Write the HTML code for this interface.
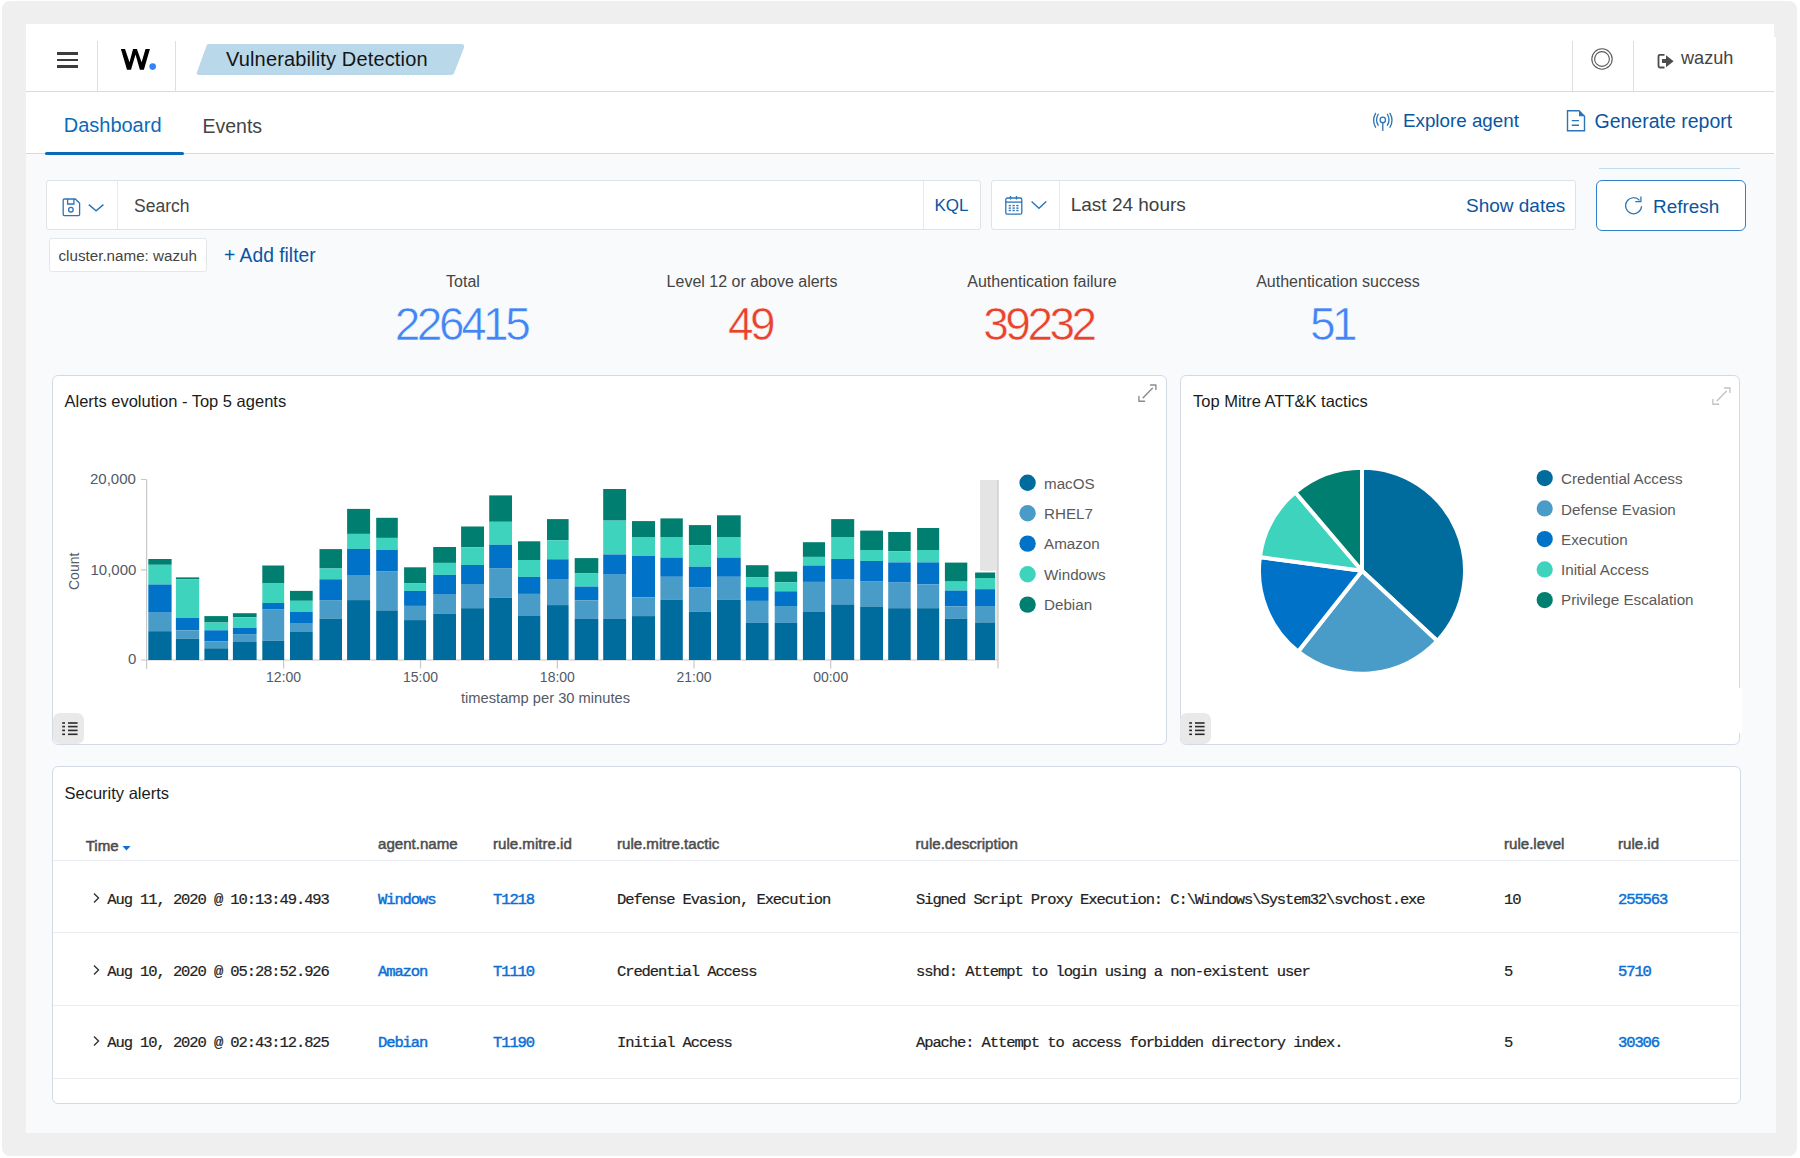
<!DOCTYPE html>
<html><head><meta charset="utf-8">
<style>
*{box-sizing:border-box;margin:0;padding:0}
html,body{width:1800px;height:1158px;overflow:hidden;background:#fff}
body{position:relative;font-family:"Liberation Sans",sans-serif;color:#343741}
.a{position:absolute;white-space:nowrap}
.frame{position:absolute;left:2px;top:1px;width:1795px;height:1155px;background:#efefef;border-radius:8px}
.page{position:absolute;left:26px;top:24px;width:1750px;height:1109px;background:#f9fafc}
.hdr{position:absolute;left:26px;top:24px;width:1750px;height:68px;background:#fff}
.tabs{position:absolute;left:26px;top:92px;width:1750px;height:61.5px;background:#fff}
.vdiv{position:absolute;width:1px;background:#dedede}
.blue{color:#0a55a2}
.panel{position:absolute;background:#fff;border:1px solid #d3dae6;border-radius:6px}
.box{position:absolute;background:#fff;border:1px solid #dfe3e8;border-radius:3px}
.stat-l{font-size:16px;color:#444;text-align:center;width:300px}
.stat-v{font-size:46px;letter-spacing:-3.5px;text-align:center;width:300px;-webkit-text-stroke:0.6px #f9fafc}
.th{font-size:15.1px;color:#4d4d4d;-webkit-text-stroke:0.5px #4d4d4d}
.td{font-family:"Liberation Mono",monospace;font-size:15.5px;letter-spacing:-1.1px;color:#222;-webkit-text-stroke:0.2px #222}
.lk{font-family:"Liberation Mono",monospace;font-size:15.5px;letter-spacing:-1.1px;color:#0b6fd6;-webkit-text-stroke:0.45px #0b6fd6}
.rowline{position:absolute;left:53px;width:1686px;height:1px;background:#e9edf2}
.leg{font-size:15.2px;color:#5a5a5a}
</style></head><body>
<div class="frame"></div>
<div class="page"></div>

<!-- header -->
<div class="hdr"></div>
<div class="a" style="left:26px;top:91px;width:1748px;height:1px;background:#d9d9d9"></div>
<div class="a" style="left:1774px;top:24px;width:2px;height:13px;background:#efefef"></div>
<div class="vdiv" style="left:97px;top:41px;height:50px"></div>
<div class="vdiv" style="left:175px;top:41px;height:50px"></div>
<div class="vdiv" style="left:1572px;top:41px;height:50px"></div>
<div class="vdiv" style="left:1633px;top:41px;height:50px"></div>
<!-- hamburger -->
<div class="a" style="left:57px;top:52px;width:21px;height:2.5px;background:#3c3c3c"></div>
<div class="a" style="left:57px;top:58.8px;width:21px;height:2.5px;background:#3c3c3c"></div>
<div class="a" style="left:57px;top:65.2px;width:21px;height:2.5px;background:#3c3c3c"></div>
<!-- logo -->
<svg class="a" style="left:118px;top:45px" width="40" height="30" viewBox="0 0 40 30">
<path d="M2.9,4 L7,4 L11.5,17.25 L15.05,4 L18.9,4 L23.6,17.25 L27.5,4 L31.9,4 L25.9,24.7 L21.9,24.7 L17.5,9.6 L13,24.7 L9,24.7 Z" fill="#000"/>
<circle cx="34.66" cy="21.6" r="3.3" fill="#3584f6"/>
</svg>
<!-- app badge -->
<svg class="a" style="left:190px;top:40px" width="280" height="40">
<path d="M17,4.5 Q18,4 20,4 L272,4 Q275,4.5 274,7.5 L264,33.5 Q263,35 260,35 L9,35 Q6,35 7,32 Z" fill="#b9d8ea"/>
</svg>
<div class="a" style="left:226px;top:48.3px;font-size:20px;color:#151515;letter-spacing:0.15px">Vulnerability Detection</div>

<!-- header right -->
<svg class="a" style="left:1589px;top:46px" width="26" height="26"><circle cx="13" cy="13" r="10.2" fill="none" stroke="#5a5a5a" stroke-width="1.1"/><circle cx="13" cy="13" r="7.4" fill="none" stroke="#5a5a5a" stroke-width="1.1"/></svg>
<svg class="a" style="left:1655px;top:52px" width="22" height="18" viewBox="0 0 22 18">
<path d="M9.5,2.8 L5,2.8 Q3.5,2.8 3.5,4.3 L3.5,14 Q3.5,15.5 5,15.5 L9.5,15.5" fill="none" stroke="#4d4d4d" stroke-width="1.8"/>
<path d="M7,7 L11,7 L11,3.3 L18.6,9.2 L11,15.2 L11,11 L7,11 Z" fill="#4d4d4d"/>
</svg>
<div class="a" style="left:1681px;top:47.6px;font-size:18.1px;color:#444">wazuh</div>

<!-- tabs -->
<div class="tabs"></div>
<div class="a" style="left:26px;top:153.3px;width:1747.7px;height:1px;background:#d5dbe3"></div>
<div class="a" style="left:63.7px;top:114.1px;font-size:20px;color:#0b6ab8">Dashboard</div>
<div class="a" style="left:202.5px;top:114.6px;font-size:19.5px;color:#444">Events</div>
<div class="a" style="left:44.5px;top:152px;width:139px;height:3px;border-radius:2px;background:#0b6ab8"></div>

<svg class="a" style="left:1369.8px;top:109.6px" width="24" height="24" viewBox="0 0 24 24">
<g fill="none" stroke="#2a74b8" stroke-width="1.3" stroke-linecap="round">
<circle cx="12.8" cy="9.9" r="2.7"/><path d="M12.8,12.7 L12.8,20.4"/>
<path d="M8.2,4.2 Q5,9.8 8.2,15.2"/><path d="M17.4,4.2 Q20.6,9.8 17.4,15.2"/>
<path d="M5.6,3.4 Q1.6,10.3 5.6,17.2"/><path d="M20,3.4 Q24,10.3 20,17.2"/>
</g></svg>
<div class="a blue" style="left:1403px;top:110.3px;font-size:18.8px">Explore agent</div>
<svg class="a" style="left:1564px;top:108px" width="24" height="26" viewBox="0 0 24 26">
<path d="M3.5,2.7 L15,2.7 L20.5,8.2 L20.5,22.8 L3.5,22.8 Z" fill="none" stroke="#2a74b8" stroke-width="1.4"/>
<path d="M15,2.7 L20.5,8.2 L15,8.2 Z" fill="#2a74b8"/>
<path d="M7.8,12.6 L15,12.6 M7.8,17.3 L15,17.3" stroke="#2a74b8" stroke-width="1.4"/>
</svg>
<div class="a blue" style="left:1594.5px;top:110.1px;font-size:19.5px">Generate report</div>

<!-- search bar -->
<div class="box" style="left:46px;top:180px;width:935px;height:50px"></div>
<div class="vdiv" style="left:117px;top:181px;height:48px;background:#e6e9ee"></div>
<div class="vdiv" style="left:923px;top:181px;height:48px;background:#e6e9ee"></div>
<svg class="a" style="left:60px;top:196px" width="48" height="22" viewBox="0 0 48 22">
<g fill="none" stroke="#2a74b8" stroke-width="1.3">
<path d="M4.3,3 L15.3,3 L19.6,7.3 L19.6,18.6 Q19.6,19.7 18.5,19.7 L4.3,19.7 Q3.2,19.7 3.2,18.6 L3.2,4.1 Q3.2,3 4.3,3 Z"/>
<path d="M7.6,3 L7.6,8 L13.9,8 L13.9,3"/>
<circle cx="10.9" cy="13.7" r="2.3"/>
<path d="M28.8,8.6 L36.1,14.9 L43.4,8.6" stroke-width="1.4"/>
</g></svg>
<div class="a" style="left:134px;top:195.8px;font-size:17.5px;color:#444">Search</div>
<div class="a blue" style="left:934.5px;top:195.7px;font-size:17px">KQL</div>

<div class="box" style="left:991px;top:180px;width:585px;height:50px"></div>
<div class="vdiv" style="left:1059px;top:181px;height:48px;background:#e6e9ee"></div>
<svg class="a" style="left:1002px;top:193px" width="48" height="24" viewBox="0 0 48 24">
<g fill="none" stroke="#2a74b8" stroke-width="1.3">
<rect x="3.8" y="5" width="16" height="16.2" rx="1.5"/>
<path d="M3.8,9.1 L19.8,9.1"/>
<path d="M8.5,3 L8.5,6.6 M14.5,3 L14.5,6.6"/>
<path d="M29.6,8.6 L37,15.2 L44.2,8.6" stroke-width="1.4"/>
</g>
<g fill="#2a74b8"><rect x="6.7" y="11.9" width="2.2" height="1.4"/><rect x="10.5" y="11.9" width="2.2" height="1.4"/><rect x="14.3" y="11.9" width="2.2" height="1.4"/>
<rect x="6.7" y="14.4" width="2.2" height="1.4"/><rect x="10.5" y="14.4" width="2.2" height="1.4"/><rect x="14.3" y="14.4" width="2.2" height="1.4"/>
<rect x="6.7" y="16.8" width="2.2" height="1.4"/><rect x="10.5" y="16.8" width="2.2" height="1.4"/><rect x="14.3" y="16.8" width="2.2" height="1.4"/></g>
</svg>
<div class="a" style="left:1070.7px;top:194.2px;font-size:19px;color:#404040">Last 24 hours</div>
<div class="a blue" style="left:1466px;top:194.5px;font-size:19px">Show dates</div>

<div class="a" style="left:1599px;top:168px;width:141px;height:1px;background:#c2daee"></div>
<div class="a" style="left:1596px;top:179.5px;width:150px;height:51px;border:1.6px solid #2f80c9;border-radius:6px;background:#fff"></div>
<svg class="a" style="left:1622px;top:194px" width="24" height="22" viewBox="0 0 24 22">
<path d="M17.5,6.3 A8,8 0 1 0 19.6,12.2" fill="none" stroke="#2a74b8" stroke-width="1.25"/>
<path d="M13.3,7.6 L18.9,7.6 L18.9,2.6" fill="none" stroke="#2a74b8" stroke-width="1.25"/>
</svg>
<div class="a blue" style="left:1653px;top:195.6px;font-size:18.9px">Refresh</div>

<!-- filter -->
<div class="box" style="left:48.5px;top:238px;width:158px;height:34px;border-color:#e3e6ea"></div>
<div class="a" style="left:58.5px;top:246.8px;font-size:15.2px;color:#444">cluster.name: wazuh</div>
<div class="a blue" style="left:224px;top:245px;font-size:19.3px">+ Add filter</div>

<!-- stats -->
<div class="a stat-l" style="left:313px;top:272.8px">Total</div>
<div class="a stat-v" style="left:311px;top:297px;color:#4285f4">226415</div>
<div class="a stat-l" style="left:602px;top:272.8px">Level 12 or above alerts</div>
<div class="a stat-v" style="left:600px;top:297px;color:#e8432d">49</div>
<div class="a stat-l" style="left:892px;top:272.8px">Authentication failure</div>
<div class="a stat-v" style="left:888.5px;top:297px;color:#e8432d">39232</div>
<div class="a stat-l" style="left:1188px;top:272.8px">Authentication success</div>
<div class="a stat-v" style="left:1182px;top:297px;color:#4285f4">51</div>

<!-- alerts evolution panel -->
<div class="panel" style="left:52.2px;top:375px;width:1114.8px;height:370px"></div>
<div class="a" style="left:64.5px;top:391.5px;font-size:16.5px;color:#1a1c21">Alerts evolution - Top 5 agents</div>
<svg class="a" style="left:1136px;top:382px" width="24" height="22" viewBox="0 0 24 22"><g fill="none" stroke="#8a8a8a" stroke-width="1.35" stroke-linecap="round" stroke-linejoin="round"><path d="M16.4,6.2 L7.1,15.7"/><path d="M14.5,3 L19.9,3 L19.9,7.6"/><path d="M2.9,14.3 L2.9,19.2 L8.6,19.2"/></g></svg>
<!-- legend toggle -->
<div class="a" style="left:53px;top:713px;width:31px;height:31px;background:#e9e9e9;border-radius:7px"></div>
<svg class="a" style="left:61px;top:720px" width="18" height="17" viewBox="0 0 18 17"><g fill="#2b2b2b">
<rect x="1.2" y="2.2" width="2.8" height="1.6"/><rect x="7" y="2.2" width="9.6" height="1.6"/>
<rect x="1.2" y="5.8" width="2.8" height="1.6"/><rect x="7" y="5.8" width="9.6" height="1.6"/>
<rect x="1.2" y="9.6" width="2.8" height="1.6"/><rect x="7" y="9.6" width="9.6" height="1.6"/>
<rect x="1.2" y="13.5" width="2.8" height="1.6"/><rect x="7" y="13.5" width="9.6" height="1.6"/></g></svg>

<!-- pie panel -->
<div class="panel" style="left:1179.5px;top:375px;width:560.5px;height:370px"></div>
<div class="a" style="left:1193px;top:392.3px;font-size:16.5px;color:#1a1c21">Top Mitre ATT&amp;K tactics</div>
<svg class="a" style="left:1710px;top:384.8px" width="24" height="22" viewBox="0 0 24 22"><g fill="none" stroke="#c2c2c2" stroke-width="1.35" stroke-linecap="round" stroke-linejoin="round"><path d="M16.4,6.2 L7.1,15.7"/><path d="M14.5,3 L19.9,3 L19.9,7.6"/><path d="M2.9,14.3 L2.9,19.2 L8.6,19.2"/></g></svg>
<div class="a" style="left:1739px;top:688px;width:3px;height:45px;background:#fff"></div>
<div class="a" style="left:1180px;top:713px;width:31px;height:31px;background:#e9e9e9;border-radius:7px"></div>
<svg class="a" style="left:1188px;top:720px" width="18" height="17" viewBox="0 0 18 17"><g fill="#2b2b2b">
<rect x="1.2" y="2.2" width="2.8" height="1.6"/><rect x="7" y="2.2" width="9.6" height="1.6"/>
<rect x="1.2" y="5.8" width="2.8" height="1.6"/><rect x="7" y="5.8" width="9.6" height="1.6"/>
<rect x="1.2" y="9.6" width="2.8" height="1.6"/><rect x="7" y="9.6" width="9.6" height="1.6"/>
<rect x="1.2" y="13.5" width="2.8" height="1.6"/><rect x="7" y="13.5" width="9.6" height="1.6"/></g></svg>

<!-- chart graphics -->
<svg class="a" style="left:0;top:0" width="1800" height="1158">
<rect x="980" y="480" width="18" height="180" fill="#e4e4e4"/>
<g stroke="#c8c8c8" stroke-width="1.2" fill="none">
<path d="M146.6,479.5 L146.6,669"/>
<path d="M141,479.5 L146.6,479.5 M141,569.8 L146.6,569.8 M141,660 L146.6,660"/>
<path d="M146.6,660 L998,660"/>
<path d="M283.6,660 L283.6,668.5 M420.5,660 L420.5,668.5 M557.4,660 L557.4,668.5 M694,660 L694,668.5 M830.7,660 L830.7,668.5 M998,480 L998,668.5"/>
</g>
<rect x="148.3" y="559.0" width="23.3" height="5.8" fill="#007e70"/>
<rect x="148.3" y="564.8" width="23.3" height="19.7" fill="#3ed3bd"/>
<rect x="148.3" y="584.5" width="23.3" height="28.2" fill="#0072c8"/>
<rect x="148.3" y="612.7" width="23.3" height="18.5" fill="#4a9cc8"/>
<rect x="148.3" y="631.2" width="23.3" height="28.8" fill="#006b9d"/>
<rect x="175.9" y="577.4" width="23.3" height="1.8" fill="#007e70"/>
<rect x="175.9" y="579.2" width="23.3" height="38.8" fill="#3ed3bd"/>
<rect x="175.9" y="618.0" width="23.3" height="12.3" fill="#0072c8"/>
<rect x="175.9" y="630.3" width="23.3" height="8.5" fill="#4a9cc8"/>
<rect x="175.9" y="638.8" width="23.3" height="21.2" fill="#006b9d"/>
<rect x="204.4" y="616.1" width="23.7" height="6.4" fill="#007e70"/>
<rect x="204.4" y="622.5" width="23.7" height="7.8" fill="#3ed3bd"/>
<rect x="204.4" y="630.3" width="23.7" height="11.2" fill="#0072c8"/>
<rect x="204.4" y="641.5" width="23.7" height="6.8" fill="#4a9cc8"/>
<rect x="204.4" y="648.3" width="23.7" height="11.7" fill="#006b9d"/>
<rect x="232.9" y="613.2" width="23.7" height="4.0" fill="#007e70"/>
<rect x="232.9" y="617.2" width="23.7" height="10.7" fill="#3ed3bd"/>
<rect x="232.9" y="627.9" width="23.7" height="6.2" fill="#0072c8"/>
<rect x="232.9" y="634.1" width="23.7" height="7.9" fill="#4a9cc8"/>
<rect x="232.9" y="642.0" width="23.7" height="18.0" fill="#006b9d"/>
<rect x="262.3" y="565.5" width="21.9" height="18.0" fill="#007e70"/>
<rect x="262.3" y="583.5" width="21.9" height="19.5" fill="#3ed3bd"/>
<rect x="262.3" y="603.0" width="21.9" height="6.1" fill="#0072c8"/>
<rect x="262.3" y="609.1" width="21.9" height="31.6" fill="#4a9cc8"/>
<rect x="262.3" y="640.7" width="21.9" height="19.3" fill="#006b9d"/>
<rect x="290.0" y="590.9" width="22.7" height="9.9" fill="#007e70"/>
<rect x="290.0" y="600.8" width="22.7" height="11.2" fill="#3ed3bd"/>
<rect x="290.0" y="612.0" width="22.7" height="11.7" fill="#0072c8"/>
<rect x="290.0" y="623.7" width="22.7" height="8.3" fill="#4a9cc8"/>
<rect x="290.0" y="632.0" width="22.7" height="28.0" fill="#006b9d"/>
<rect x="319.5" y="549.1" width="22.5" height="19.4" fill="#007e70"/>
<rect x="319.5" y="568.5" width="22.5" height="10.8" fill="#3ed3bd"/>
<rect x="319.5" y="579.3" width="22.5" height="20.8" fill="#0072c8"/>
<rect x="319.5" y="600.1" width="22.5" height="18.5" fill="#4a9cc8"/>
<rect x="319.5" y="618.6" width="22.5" height="41.4" fill="#006b9d"/>
<rect x="347.1" y="508.9" width="23.0" height="25.0" fill="#007e70"/>
<rect x="347.1" y="533.9" width="23.0" height="15.0" fill="#3ed3bd"/>
<rect x="347.1" y="548.9" width="23.0" height="26.1" fill="#0072c8"/>
<rect x="347.1" y="575.0" width="23.0" height="25.1" fill="#4a9cc8"/>
<rect x="347.1" y="600.1" width="23.0" height="59.9" fill="#006b9d"/>
<rect x="376.2" y="517.8" width="21.6" height="20.1" fill="#007e70"/>
<rect x="376.2" y="537.9" width="21.6" height="11.9" fill="#3ed3bd"/>
<rect x="376.2" y="549.8" width="21.6" height="21.3" fill="#0072c8"/>
<rect x="376.2" y="571.1" width="21.6" height="39.3" fill="#4a9cc8"/>
<rect x="376.2" y="610.4" width="21.6" height="49.6" fill="#006b9d"/>
<rect x="404.1" y="567.3" width="22.0" height="15.8" fill="#007e70"/>
<rect x="404.1" y="583.1" width="22.0" height="7.8" fill="#3ed3bd"/>
<rect x="404.1" y="590.9" width="22.0" height="15.0" fill="#0072c8"/>
<rect x="404.1" y="605.9" width="22.0" height="14.2" fill="#4a9cc8"/>
<rect x="404.1" y="620.1" width="22.0" height="39.9" fill="#006b9d"/>
<rect x="433.2" y="547.0" width="22.8" height="15.9" fill="#007e70"/>
<rect x="433.2" y="562.9" width="22.8" height="12.0" fill="#3ed3bd"/>
<rect x="433.2" y="574.9" width="22.8" height="19.1" fill="#0072c8"/>
<rect x="433.2" y="594.0" width="22.8" height="19.9" fill="#4a9cc8"/>
<rect x="433.2" y="613.9" width="22.8" height="46.1" fill="#006b9d"/>
<rect x="461.1" y="526.5" width="22.9" height="20.7" fill="#007e70"/>
<rect x="461.1" y="547.2" width="22.9" height="17.8" fill="#3ed3bd"/>
<rect x="461.1" y="565.0" width="22.9" height="19.0" fill="#0072c8"/>
<rect x="461.1" y="584.0" width="22.9" height="24.2" fill="#4a9cc8"/>
<rect x="461.1" y="608.2" width="22.9" height="51.8" fill="#006b9d"/>
<rect x="489.2" y="495.4" width="22.8" height="26.4" fill="#007e70"/>
<rect x="489.2" y="521.8" width="22.8" height="23.0" fill="#3ed3bd"/>
<rect x="489.2" y="544.8" width="22.8" height="23.3" fill="#0072c8"/>
<rect x="489.2" y="568.1" width="22.8" height="29.7" fill="#4a9cc8"/>
<rect x="489.2" y="597.8" width="22.8" height="62.2" fill="#006b9d"/>
<rect x="518.0" y="541.3" width="22.3" height="18.7" fill="#007e70"/>
<rect x="518.0" y="560.0" width="22.3" height="16.9" fill="#3ed3bd"/>
<rect x="518.0" y="576.9" width="22.3" height="17.0" fill="#0072c8"/>
<rect x="518.0" y="593.9" width="22.3" height="22.1" fill="#4a9cc8"/>
<rect x="518.0" y="616.0" width="22.3" height="44.0" fill="#006b9d"/>
<rect x="547.0" y="519.1" width="21.6" height="21.2" fill="#007e70"/>
<rect x="547.0" y="540.3" width="21.6" height="19.0" fill="#3ed3bd"/>
<rect x="547.0" y="559.3" width="21.6" height="19.7" fill="#0072c8"/>
<rect x="547.0" y="579.0" width="21.6" height="26.1" fill="#4a9cc8"/>
<rect x="547.0" y="605.1" width="21.6" height="54.9" fill="#006b9d"/>
<rect x="574.7" y="558.1" width="23.6" height="15.0" fill="#007e70"/>
<rect x="574.7" y="573.1" width="23.6" height="13.5" fill="#3ed3bd"/>
<rect x="574.7" y="586.6" width="23.6" height="13.8" fill="#0072c8"/>
<rect x="574.7" y="600.4" width="23.6" height="18.5" fill="#4a9cc8"/>
<rect x="574.7" y="618.9" width="23.6" height="41.1" fill="#006b9d"/>
<rect x="603.2" y="489.0" width="22.9" height="31.6" fill="#007e70"/>
<rect x="603.2" y="520.6" width="22.9" height="33.9" fill="#3ed3bd"/>
<rect x="603.2" y="554.5" width="22.9" height="20.2" fill="#0072c8"/>
<rect x="603.2" y="574.7" width="22.9" height="44.2" fill="#4a9cc8"/>
<rect x="603.2" y="618.9" width="22.9" height="41.1" fill="#006b9d"/>
<rect x="632.0" y="521.1" width="23.0" height="15.9" fill="#007e70"/>
<rect x="632.0" y="537.0" width="23.0" height="19.0" fill="#3ed3bd"/>
<rect x="632.0" y="556.0" width="23.0" height="41.5" fill="#0072c8"/>
<rect x="632.0" y="597.5" width="23.0" height="18.6" fill="#4a9cc8"/>
<rect x="632.0" y="616.1" width="23.0" height="43.9" fill="#006b9d"/>
<rect x="660.4" y="518.4" width="22.4" height="18.6" fill="#007e70"/>
<rect x="660.4" y="537.0" width="22.4" height="20.6" fill="#3ed3bd"/>
<rect x="660.4" y="557.6" width="22.4" height="19.2" fill="#0072c8"/>
<rect x="660.4" y="576.8" width="22.4" height="22.8" fill="#4a9cc8"/>
<rect x="660.4" y="599.6" width="22.4" height="60.4" fill="#006b9d"/>
<rect x="688.9" y="525.1" width="22.1" height="20.0" fill="#007e70"/>
<rect x="688.9" y="545.1" width="22.1" height="21.6" fill="#3ed3bd"/>
<rect x="688.9" y="566.7" width="22.1" height="20.4" fill="#0072c8"/>
<rect x="688.9" y="587.1" width="22.1" height="24.5" fill="#4a9cc8"/>
<rect x="688.9" y="611.6" width="22.1" height="48.4" fill="#006b9d"/>
<rect x="717.0" y="515.3" width="23.7" height="21.7" fill="#007e70"/>
<rect x="717.0" y="537.0" width="23.7" height="20.6" fill="#3ed3bd"/>
<rect x="717.0" y="557.6" width="23.7" height="19.2" fill="#0072c8"/>
<rect x="717.0" y="576.8" width="23.7" height="22.8" fill="#4a9cc8"/>
<rect x="717.0" y="599.6" width="23.7" height="60.4" fill="#006b9d"/>
<rect x="745.9" y="565.2" width="22.6" height="11.9" fill="#007e70"/>
<rect x="745.9" y="577.1" width="22.6" height="10.0" fill="#3ed3bd"/>
<rect x="745.9" y="587.1" width="22.6" height="13.8" fill="#0072c8"/>
<rect x="745.9" y="600.9" width="22.6" height="22.0" fill="#4a9cc8"/>
<rect x="745.9" y="622.9" width="22.6" height="37.1" fill="#006b9d"/>
<rect x="774.7" y="571.6" width="22.5" height="10.7" fill="#007e70"/>
<rect x="774.7" y="582.3" width="22.5" height="9.0" fill="#3ed3bd"/>
<rect x="774.7" y="591.3" width="22.5" height="14.7" fill="#0072c8"/>
<rect x="774.7" y="606.0" width="22.5" height="16.9" fill="#4a9cc8"/>
<rect x="774.7" y="622.9" width="22.5" height="37.1" fill="#006b9d"/>
<rect x="802.9" y="542.2" width="22.1" height="14.7" fill="#007e70"/>
<rect x="802.9" y="556.9" width="22.1" height="8.6" fill="#3ed3bd"/>
<rect x="802.9" y="565.5" width="22.1" height="16.4" fill="#0072c8"/>
<rect x="802.9" y="581.9" width="22.1" height="30.1" fill="#4a9cc8"/>
<rect x="802.9" y="612.0" width="22.1" height="48.0" fill="#006b9d"/>
<rect x="831.2" y="519.1" width="23.0" height="17.9" fill="#007e70"/>
<rect x="831.2" y="537.0" width="23.0" height="22.0" fill="#3ed3bd"/>
<rect x="831.2" y="559.0" width="23.0" height="20.0" fill="#0072c8"/>
<rect x="831.2" y="579.0" width="23.0" height="25.4" fill="#4a9cc8"/>
<rect x="831.2" y="604.4" width="23.0" height="55.6" fill="#006b9d"/>
<rect x="860.2" y="530.6" width="22.8" height="19.4" fill="#007e70"/>
<rect x="860.2" y="550.0" width="22.8" height="11.0" fill="#3ed3bd"/>
<rect x="860.2" y="561.0" width="22.8" height="20.1" fill="#0072c8"/>
<rect x="860.2" y="581.1" width="22.8" height="25.4" fill="#4a9cc8"/>
<rect x="860.2" y="606.5" width="22.8" height="53.5" fill="#006b9d"/>
<rect x="888.2" y="532.0" width="22.5" height="19.2" fill="#007e70"/>
<rect x="888.2" y="551.2" width="22.5" height="11.2" fill="#3ed3bd"/>
<rect x="888.2" y="562.4" width="22.5" height="20.2" fill="#0072c8"/>
<rect x="888.2" y="582.6" width="22.5" height="25.6" fill="#4a9cc8"/>
<rect x="888.2" y="608.2" width="22.5" height="51.8" fill="#006b9d"/>
<rect x="917.1" y="528.0" width="22.1" height="22.0" fill="#007e70"/>
<rect x="917.1" y="550.0" width="22.1" height="12.4" fill="#3ed3bd"/>
<rect x="917.1" y="562.4" width="22.1" height="22.1" fill="#0072c8"/>
<rect x="917.1" y="584.5" width="22.1" height="23.7" fill="#4a9cc8"/>
<rect x="917.1" y="608.2" width="22.1" height="51.8" fill="#006b9d"/>
<rect x="944.9" y="562.6" width="22.4" height="19.0" fill="#007e70"/>
<rect x="944.9" y="581.6" width="22.4" height="9.0" fill="#3ed3bd"/>
<rect x="944.9" y="590.6" width="22.4" height="15.9" fill="#0072c8"/>
<rect x="944.9" y="606.5" width="22.4" height="12.1" fill="#4a9cc8"/>
<rect x="944.9" y="618.6" width="22.4" height="41.4" fill="#006b9d"/>
<rect x="975.1" y="572.3" width="19.9" height="5.7" fill="#007e70"/>
<rect x="975.1" y="578.0" width="19.9" height="11.2" fill="#3ed3bd"/>
<rect x="975.1" y="589.2" width="19.9" height="16.8" fill="#0072c8"/>
<rect x="975.1" y="606.0" width="19.9" height="16.5" fill="#4a9cc8"/>
<rect x="975.1" y="622.5" width="19.9" height="37.5" fill="#006b9d"/>
<rect x="975" y="570.8" width="21" height="1.5" fill="#fff"/>
<path d="M1362.0,570.7 L1362.00,467.70 A103.0,103.0 0 0 1 1437.33,640.95 Z" fill="#006b9d" stroke="#fff" stroke-width="4" stroke-linejoin="round"/>
<path d="M1362.0,570.7 L1437.33,640.95 A103.0,103.0 0 0 1 1298.16,651.53 Z" fill="#4a9cc8" stroke="#fff" stroke-width="4" stroke-linejoin="round"/>
<path d="M1362.0,570.7 L1298.16,651.53 A103.0,103.0 0 0 1 1259.90,557.08 Z" fill="#0072c8" stroke="#fff" stroke-width="4" stroke-linejoin="round"/>
<path d="M1362.0,570.7 L1259.90,557.08 A103.0,103.0 0 0 1 1295.24,492.26 Z" fill="#3ed3bd" stroke="#fff" stroke-width="4" stroke-linejoin="round"/>
<path d="M1362.0,570.7 L1295.24,492.26 A103.0,103.0 0 0 1 1362.00,467.70 Z" fill="#007e70" stroke="#fff" stroke-width="4" stroke-linejoin="round"/>
<g>
<circle cx="1027.6" cy="482.8" r="8.2" fill="#006b9d"/>
<circle cx="1027.6" cy="513.2" r="8.2" fill="#4a9cc8"/>
<circle cx="1027.6" cy="543.6" r="8.2" fill="#0072c8"/>
<circle cx="1027.6" cy="574.2" r="8.2" fill="#3ed3bd"/>
<circle cx="1027.6" cy="604.6" r="8.2" fill="#007e70"/>
<circle cx="1544.7" cy="478.1" r="8.1" fill="#006b9d"/>
<circle cx="1544.7" cy="508.4" r="8.1" fill="#4a9cc8"/>
<circle cx="1544.7" cy="539.1" r="8.1" fill="#0072c8"/>
<circle cx="1544.7" cy="569.4" r="8.1" fill="#3ed3bd"/>
<circle cx="1544.7" cy="600.1" r="8.1" fill="#007e70"/>
</g>
</svg>
<div class="a" style="left:60px;top:570px;transform:rotate(-90deg);transform-origin:0 0;font-size:14px;color:#535966"><span style="position:absolute;left:-20px;top:6px">Count</span></div>
<div class="a" style="left:90px;top:470.4px;font-size:15px;color:#535966">20,000</div>
<div class="a" style="left:90.5px;top:561.2px;font-size:15px;color:#535966">10,000</div>
<div class="a" style="left:128px;top:649.5px;font-size:15px;color:#535966">0</div>
<div class="a" style="left:253.6px;top:669.2px;width:60px;text-align:center;font-size:14px;color:#535966">12:00</div>
<div class="a" style="left:390.5px;top:669.2px;width:60px;text-align:center;font-size:14px;color:#535966">15:00</div>
<div class="a" style="left:527.4px;top:669.2px;width:60px;text-align:center;font-size:14px;color:#535966">18:00</div>
<div class="a" style="left:664.0px;top:669.2px;width:60px;text-align:center;font-size:14px;color:#535966">21:00</div>
<div class="a" style="left:800.7px;top:669.2px;width:60px;text-align:center;font-size:14px;color:#535966">00:00</div>
<div class="a" style="left:445.5px;top:690.4px;width:200px;text-align:center;font-size:14.7px;color:#535966">timestamp per 30 minutes</div>

<div class="a leg" style="left:1044px;top:475.0px">macOS</div>
<div class="a leg" style="left:1044px;top:505.2px">RHEL7</div>
<div class="a leg" style="left:1044px;top:535.4px">Amazon</div>
<div class="a leg" style="left:1044px;top:565.6px">Windows</div>
<div class="a leg" style="left:1044px;top:595.8px">Debian</div>
<div class="a leg" style="left:1561px;top:470.2px">Credential Access</div>
<div class="a leg" style="left:1561px;top:500.5px">Defense Evasion</div>
<div class="a leg" style="left:1561px;top:530.8px">Execution</div>
<div class="a leg" style="left:1561px;top:561.1px">Initial Access</div>
<div class="a leg" style="left:1561px;top:591.4px">Privilege Escalation</div>

<!-- security alerts -->
<div class="panel" style="left:52px;top:765.8px;width:1688.5px;height:338.7px"></div>
<div class="a" style="left:64.5px;top:784px;font-size:16.5px;color:#1a1c21">Security alerts</div>
<div class="a th" style="left:85.7px;top:837.2px">Time</div>
<svg class="a" style="left:121px;top:844px" width="11" height="8"><path d="M1.5,2 L9.5,2 L5.5,6.5 Z" fill="#0b70d4"/></svg>
<div class="a th" style="left:378px;top:834.7px">agent.name</div>
<div class="a th" style="left:493px;top:834.7px">rule.mitre.id</div>
<div class="a th" style="left:617px;top:834.7px">rule.mitre.tactic</div>
<div class="a th" style="left:915.5px;top:834.7px">rule.description</div>
<div class="a th" style="left:1504px;top:834.7px">rule.level</div>
<div class="a th" style="left:1618px;top:834.7px">rule.id</div>
<div class="rowline" style="top:860px"></div>
<div class="rowline" style="top:932px"></div>
<div class="rowline" style="top:1005px"></div>
<div class="rowline" style="top:1078px"></div>

<svg class="a" style="left:90px;top:891px" width="12" height="14"><path d="M4,2.5 L8.5,7 L4,11.5" fill="none" stroke="#333" stroke-width="1.4"/></svg>
<div class="a td" style="left:107.3px;top:891.1px">Aug 11, 2020 @ 10:13:49.493</div>
<div class="a lk" style="left:378px;top:891.1px">Windows</div>
<div class="a lk" style="left:493px;top:891.1px">T1218</div>
<div class="a td" style="left:617px;top:891.1px">Defense Evasion, Execution</div>
<div class="a td" style="left:916px;top:891.1px">Signed Script Proxy Execution: C:\Windows\System32\svchost.exe</div>
<div class="a td" style="left:1504px;top:891.1px">10</div>
<div class="a lk" style="left:1618px;top:891.1px">255563</div>

<svg class="a" style="left:90px;top:963px" width="12" height="14"><path d="M4,2.5 L8.5,7 L4,11.5" fill="none" stroke="#333" stroke-width="1.4"/></svg>
<div class="a td" style="left:107.3px;top:962.8px">Aug 10, 2020 @ 05:28:52.926</div>
<div class="a lk" style="left:378px;top:962.8px">Amazon</div>
<div class="a lk" style="left:493px;top:962.8px">T1110</div>
<div class="a td" style="left:617px;top:962.8px">Credential Access</div>
<div class="a td" style="left:916px;top:962.8px">sshd: Attempt to login using a non-existent user</div>
<div class="a td" style="left:1504px;top:962.8px">5</div>
<div class="a lk" style="left:1618px;top:962.8px">5710</div>

<svg class="a" style="left:90px;top:1034px" width="12" height="14"><path d="M4,2.5 L8.5,7 L4,11.5" fill="none" stroke="#333" stroke-width="1.4"/></svg>
<div class="a td" style="left:107.3px;top:1033.8px">Aug 10, 2020 @ 02:43:12.825</div>
<div class="a lk" style="left:378px;top:1033.8px">Debian</div>
<div class="a lk" style="left:493px;top:1033.8px">T1190</div>
<div class="a td" style="left:617px;top:1033.8px">Initial Access</div>
<div class="a td" style="left:916px;top:1033.8px">Apache: Attempt to access forbidden directory index.</div>
<div class="a td" style="left:1504px;top:1033.8px">5</div>
<div class="a lk" style="left:1618px;top:1033.8px">30306</div>

</body></html>
